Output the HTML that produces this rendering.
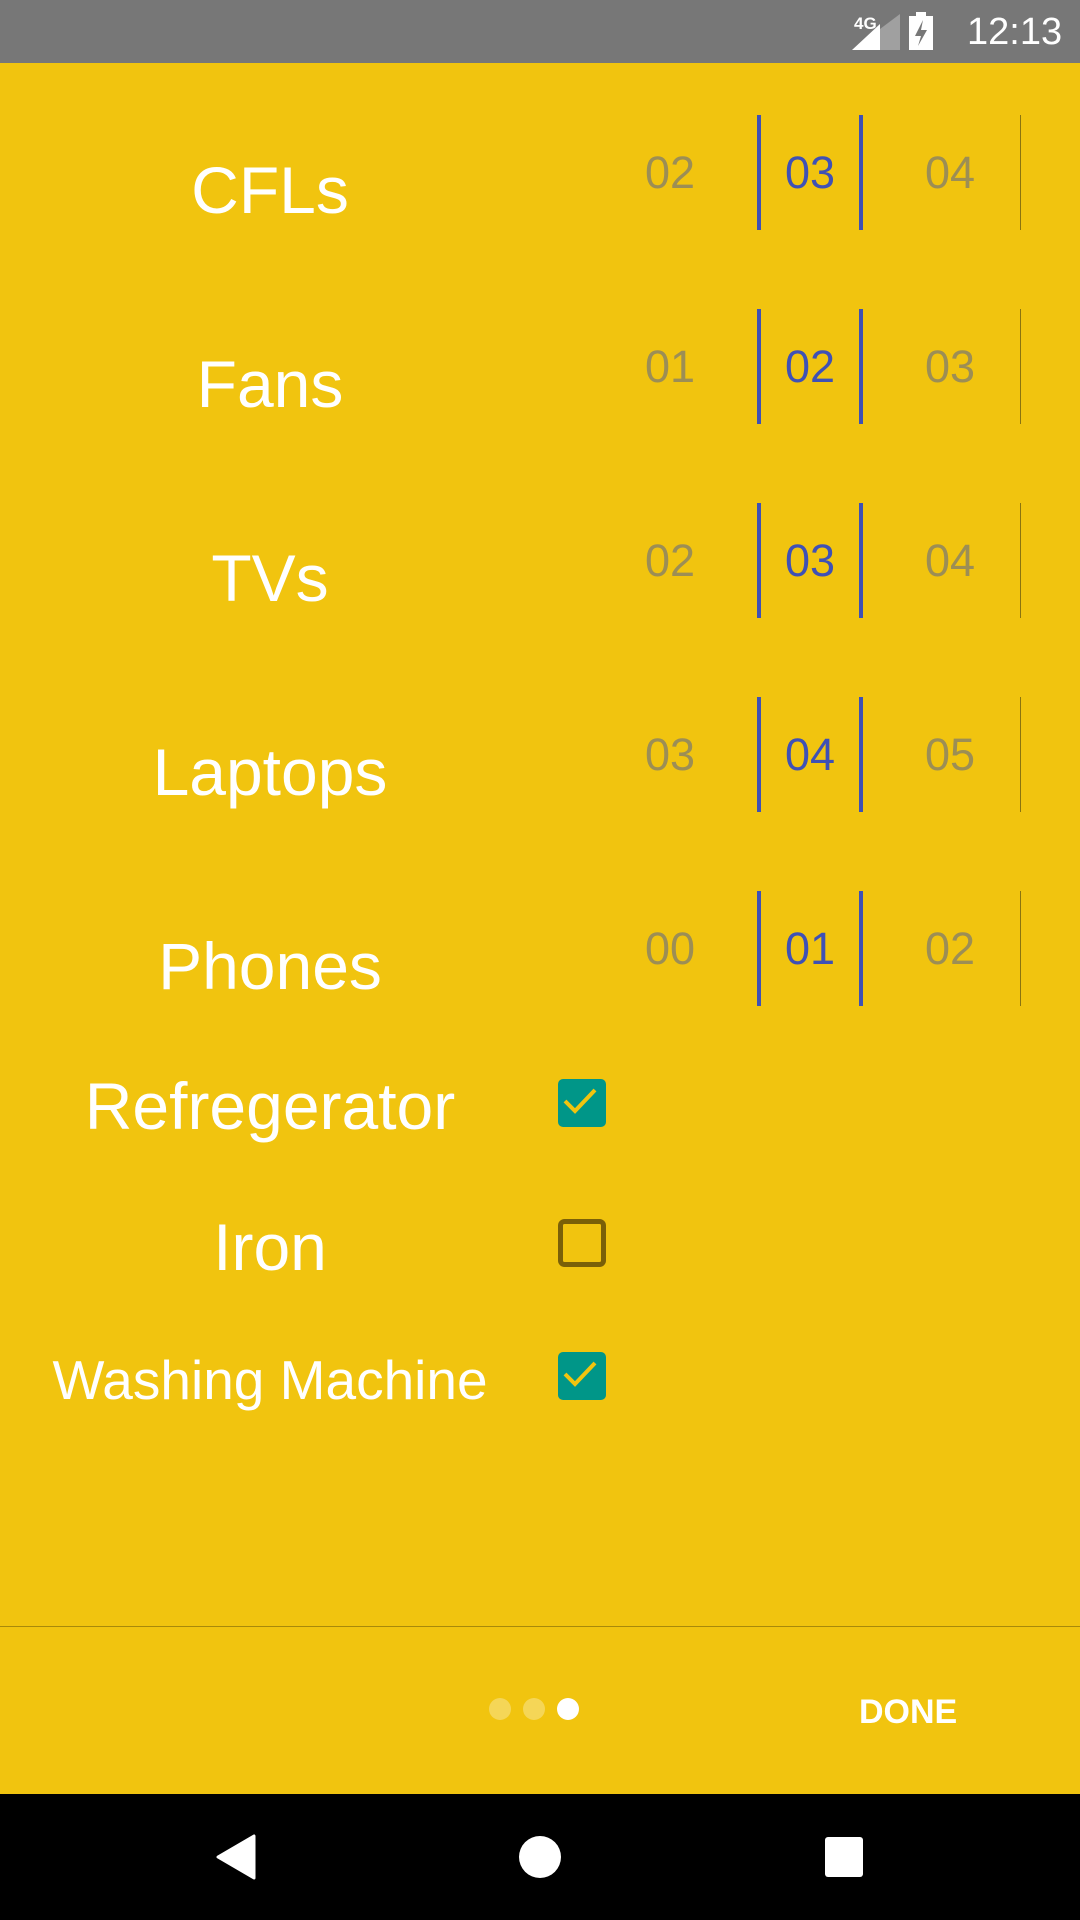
<!DOCTYPE html>
<html><head><meta charset="utf-8"><style>
*{margin:0;padding:0;box-sizing:border-box}
body{width:1080px;height:1920px;background:#F1C40F;position:relative;overflow:hidden;font-family:"Liberation Sans",sans-serif}
.abs{position:absolute}
.sb{left:0;top:0;width:1080px;height:63px;background:#777}
.lbl{left:0;width:540px;text-align:center;color:#fff;font-size:66px;line-height:80px}
.num{width:110px;text-align:center;font-size:45px;line-height:60px;color:#9c8e55}
.sel{color:#3F51B5}
.vl{width:4px;height:115px;background:#3F51B5}
.el{width:1px;height:115px;background:#8a7410;left:1020px}
</style></head><body>
<div class="abs sb"></div>
<div class="abs" style="left:854px;top:14px;color:#fff;font-size:17px;font-weight:bold">4G</div>
<svg class="abs" style="left:850px;top:12px" width="50" height="40"><polygon points="2,38 50,38 50,2" fill="#a0a0a0"/><polygon points="2,38 30,38 30,12" fill="#fff"/></svg>
<svg class="abs" style="left:909px;top:12px" width="26" height="38"><rect x="0" y="4" width="24" height="34" fill="#fff"/><rect x="7" y="0" width="10" height="5" fill="#fff"/><polygon points="14,8 6,24 12,24 9,34 18,18 12,18" fill="#777"/></svg>
<div class="abs" style="left:967px;top:9px;color:#fff;font-size:38px;line-height:46px">12:13</div>

<div class="abs lbl" style="top:150px">CFLs</div>
<div class="abs lbl" style="top:344px">Fans</div>
<div class="abs lbl" style="top:538px">TVs</div>
<div class="abs lbl" style="top:732px">Laptops</div>
<div class="abs lbl" style="top:926px">Phones</div>

<div class="abs" style="left:0;top:115px;width:1080px;height:115px">
<div class="abs num" style="left:615px;top:28px">02</div><div class="abs num sel" style="left:755px;top:28px">03</div><div class="abs num" style="left:895px;top:28px">04</div>
<div class="abs vl" style="left:757px"></div><div class="abs vl" style="left:859px"></div><div class="abs el"></div></div>
<div class="abs" style="left:0;top:309px;width:1080px;height:115px">
<div class="abs num" style="left:615px;top:28px">01</div><div class="abs num sel" style="left:755px;top:28px">02</div><div class="abs num" style="left:895px;top:28px">03</div>
<div class="abs vl" style="left:757px"></div><div class="abs vl" style="left:859px"></div><div class="abs el"></div></div>
<div class="abs" style="left:0;top:503px;width:1080px;height:115px">
<div class="abs num" style="left:615px;top:28px">02</div><div class="abs num sel" style="left:755px;top:28px">03</div><div class="abs num" style="left:895px;top:28px">04</div>
<div class="abs vl" style="left:757px"></div><div class="abs vl" style="left:859px"></div><div class="abs el"></div></div>
<div class="abs" style="left:0;top:697px;width:1080px;height:115px">
<div class="abs num" style="left:615px;top:28px">03</div><div class="abs num sel" style="left:755px;top:28px">04</div><div class="abs num" style="left:895px;top:28px">05</div>
<div class="abs vl" style="left:757px"></div><div class="abs vl" style="left:859px"></div><div class="abs el"></div></div>
<div class="abs" style="left:0;top:891px;width:1080px;height:115px">
<div class="abs num" style="left:615px;top:28px">00</div><div class="abs num sel" style="left:755px;top:28px">01</div><div class="abs num" style="left:895px;top:28px">02</div>
<div class="abs vl" style="left:757px"></div><div class="abs vl" style="left:859px"></div><div class="abs el"></div></div>

<div class="abs lbl" style="top:1066px">Refregerator</div>
<div class="abs lbl" style="top:1207px">Iron</div>
<div class="abs lbl" style="top:1340px;font-size:55px">Washing Machine</div>

<svg class="abs" style="left:558px;top:1079px" width="48" height="48"><rect width="48" height="48" rx="5" fill="#009688"/><polyline points="7,22 17,32 37,11" fill="none" stroke="#F1C40F" stroke-width="4"/></svg>
<svg class="abs" style="left:558px;top:1219px" width="48" height="48"><rect x="2.5" y="2.5" width="43" height="43" rx="4" fill="none" stroke="#7a6008" stroke-width="5"/></svg>
<svg class="abs" style="left:558px;top:1352px" width="48" height="48"><rect width="48" height="48" rx="5" fill="#009688"/><polyline points="7,22 17,32 37,11" fill="none" stroke="#F1C40F" stroke-width="4"/></svg>

<div class="abs" style="left:0;top:1626px;width:1080px;height:1px;background:#a88a0a"></div>
<div class="abs" style="left:489px;top:1698px;width:22px;height:22px;border-radius:50%;background:rgba(255,255,255,.3)"></div>
<div class="abs" style="left:523px;top:1698px;width:22px;height:22px;border-radius:50%;background:rgba(255,255,255,.3)"></div>
<div class="abs" style="left:557px;top:1698px;width:22px;height:22px;border-radius:50%;background:#fff"></div>
<div class="abs" style="left:859px;top:1692px;color:#fff;font-size:34px;font-weight:bold;line-height:40px">DONE</div>

<div class="abs" style="left:0;top:1794px;width:1080px;height:126px;background:#000"></div>
<svg class="abs" style="left:214px;top:1834px" width="44" height="46"><path d="M40 2 L40 44 L4 23 Z" fill="#fff" stroke="#fff" stroke-width="3" stroke-linejoin="round"/></svg>
<div class="abs" style="left:519px;top:1836px;width:42px;height:42px;border-radius:50%;background:#fff"></div>
<div class="abs" style="left:825px;top:1837px;width:38px;height:40px;border-radius:3px;background:#fff"></div>
</body></html>
